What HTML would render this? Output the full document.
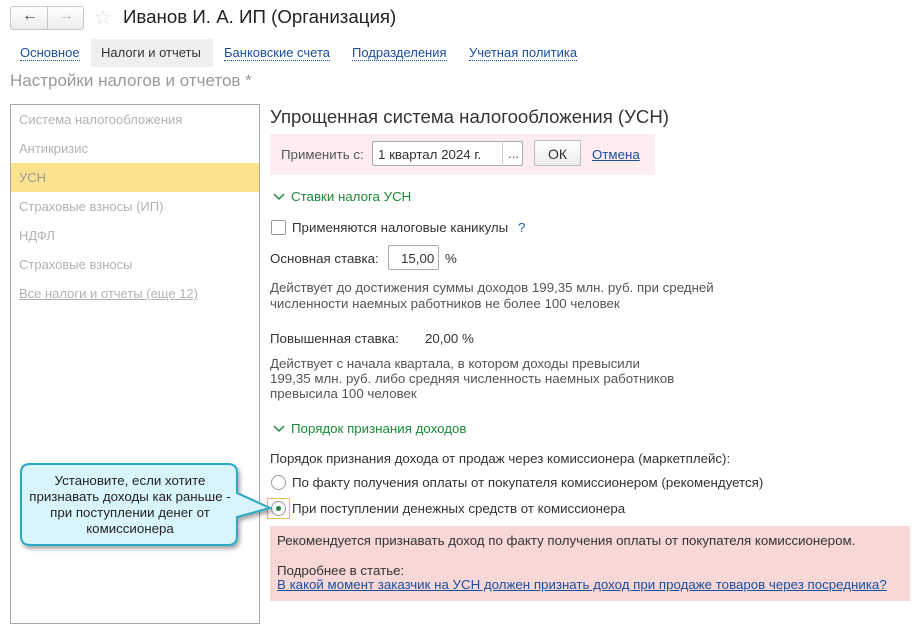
<!DOCTYPE html>
<html><head><meta charset="utf-8"><style>
*{margin:0;padding:0;box-sizing:border-box}
body{width:921px;height:615px;overflow:hidden;background:#fff;font-family:"Liberation Sans",Arial,sans-serif;font-size:13.3px;color:#333;position:relative}
.a{position:absolute;white-space:nowrap}
.lnk{color:#1a4fa0;border-bottom:1px dotted #1a4fa0}
.ul{color:#1a4fa0;text-decoration:underline}
.gray{color:#555}
.grn{color:#1a8a3a}
.mi{position:absolute;left:19px;color:#b3b3b3;font-size:13px}
</style></head><body>
<div class="a" style="left:10px;top:6px;width:74px;height:24px;border:1px solid #c8c8c8;border-radius:3px;background:linear-gradient(#fff,#ececec)"></div>
<div class="a" style="left:47px;top:7px;width:1px;height:22px;background:#c8c8c8"></div>
<div class="a" style="left:22px;top:7px;font-size:16px;color:#444">&#8592;</div>
<div class="a" style="left:58px;top:7px;font-size:16px;color:#bbb">&#8594;</div>
<div class="a" style="left:94px;top:5px;font-size:20px;color:#ddd">&#9734;</div>
<div class="a" style="left:123px;top:6px;font-size:18.7px;color:#222">Иванов И. А. ИП (Организация)</div>
<div class="a" style="left:91px;top:39px;width:122px;height:28px;background:#efefef;border-radius:2px"></div>
<div class="a lnk" style="left:20px;top:45px;font-size:13px">Основное</div>
<div class="a" style="left:101px;top:45px;color:#333;font-size:13px">Налоги и отчеты</div>
<div class="a lnk" style="left:224px;top:45px;font-size:13px">Банковские счета</div>
<div class="a lnk" style="left:352px;top:45px;font-size:13px">Подразделения</div>
<div class="a lnk" style="left:469px;top:45px;font-size:13px">Учетная политика</div>
<div class="a" style="left:10px;top:71px;font-size:17px;color:#9a9a9a">Настройки налогов и отчетов *</div>
<div class="a" style="left:10px;top:104px;width:250px;height:520px;border:1px solid #a8a8a8"></div>
<div class="a" style="left:11px;top:163px;width:248px;height:29px;background:#fbe28f"></div>
<div class="mi" style="top:112px">Система налогообложения</div>
<div class="mi" style="top:141px">Антикризис</div>
<div class="mi" style="top:170px;color:#999">УСН</div>
<div class="mi" style="top:199px">Страховые взносы (ИП)</div>
<div class="mi" style="top:228px">НДФЛ</div>
<div class="mi" style="top:257px">Страховые взносы</div>
<div class="mi" style="top:286px;text-decoration:underline">Все налоги и отчеты (еще 12)</div>
<div class="a" style="left:270px;top:106px;font-size:18.6px;color:#333">Упрощенная система налогообложения (УСН)</div>
<div class="a" style="left:270px;top:134px;width:385px;height:41px;background:#fdedf1"></div>
<div class="a gray" style="left:281px;top:147px">Применить с:</div>
<div class="a" style="left:372px;top:141px;width:151px;height:25px;border:1px solid #aaa;border-radius:2px;background:#fff"></div>
<div class="a" style="left:502px;top:141px;width:1px;height:25px;background:#ccc"></div>
<div class="a" style="left:378px;top:147px;color:#333">1 квартал 2024 г.</div>
<div class="a" style="left:508px;top:146px;color:#555">...</div>
<div class="a" style="left:534px;top:140px;width:47px;height:26px;border:1px solid #bbb;border-radius:2px;background:linear-gradient(#fff,#ececec)"></div>
<div class="a" style="left:548px;top:146px;font-size:14px;color:#333">ОК</div>
<div class="a ul" style="left:592px;top:147px">Отмена</div>
<svg class="a" style="left:273px;top:192px" width="12" height="10"><path d="M1 2 L6 7 L11 2" fill="none" stroke="#1a8a3a" stroke-width="1.5"/></svg>
<div class="a grn" style="left:291px;top:189px">Ставки налога УСН</div>
<div class="a" style="left:271px;top:220px;width:15px;height:15px;border:1px solid #999;border-radius:2px;background:#fff"></div>
<div class="a" style="left:292px;top:220px">Применяются налоговые каникулы</div>
<div class="a" style="left:518px;top:220px;color:#1a60b0">?</div>
<div class="a" style="left:270px;top:251px">Основная ставка:</div>
<div class="a" style="left:388px;top:245px;width:51px;height:25px;border:1px solid #aaa;border-radius:2px"></div>
<div class="a" style="left:401px;top:251px">15,00</div>
<div class="a" style="left:445px;top:251px">%</div>
<div class="a gray" style="left:270px;top:280px;line-height:16px">Действует до достижения суммы доходов 199,35 млн. руб. при средней<br>численности наемных работников не более 100 человек</div>
<div class="a" style="left:270px;top:331px">Повышенная ставка:</div>
<div class="a" style="left:425px;top:331px">20,00 %</div>
<div class="a gray" style="left:270px;top:356px;line-height:15px">Действует с начала квартала, в котором доходы превысили<br>199,35 млн. руб. либо средняя численность наемных работников<br>превысила 100 человек</div>
<svg class="a" style="left:273px;top:424px" width="12" height="10"><path d="M1 2 L6 7 L11 2" fill="none" stroke="#1a8a3a" stroke-width="1.5"/></svg>
<div class="a grn" style="left:291px;top:421px">Порядок признания доходов</div>
<div class="a" style="left:270px;top:451px">Порядок признания дохода от продаж через комиссионера (маркетплейс):</div>
<div class="a" style="left:271px;top:475px;width:15px;height:15px;border:1px solid #999;border-radius:50%"></div>
<div class="a" style="left:292px;top:475px">По факту получения оплаты от покупателя комиссионером (рекомендуется)</div>
<div class="a" style="left:267px;top:498px;width:23px;height:21px;border:1px solid #f0c040"></div>
<div class="a" style="left:271px;top:501px;width:15px;height:15px;border:1px solid #999;border-radius:50%"></div>
<div class="a" style="left:276px;top:506px;width:5px;height:5px;background:#1a8a3a;border-radius:50%"></div>
<div class="a" style="left:292px;top:501px">При поступлении денежных средств от комиссионера</div>
<div class="a" style="left:270px;top:526px;width:640px;height:75px;background:#f8d7d7"></div>
<div class="a" style="left:277px;top:533px">Рекомендуется признавать доход по факту получения оплаты от покупателя комиссионером.</div>
<div class="a" style="left:277px;top:563px">Подробнее в статье:</div>
<div class="a ul" style="left:277px;top:577px">В какой момент заказчик на УСН должен признать доход при продаже товаров через посредника?</div>
<svg class="a" style="left:0;top:455px" width="280" height="110">
<defs><filter id="s"><feDropShadow dx="2" dy="3" stdDeviation="2" flood-opacity="0.35"/></filter></defs>
<path d="M30 9 H228 Q237 9 237 18 V38 L270 53 L237 62 V81 Q237 90 228 90 H30 Q21 90 21 81 V18 Q21 9 30 9 Z" fill="#d8f5fc" stroke="#29a9c4" stroke-width="2" filter="url(#s)"/>
</svg>
<div class="a" style="left:22px;top:473px;width:216px;text-align:center;white-space:normal;line-height:16px;color:#222">Установите, если хотите признавать доходы как раньше - при поступлении денег от комиссионера</div>
</body></html>
